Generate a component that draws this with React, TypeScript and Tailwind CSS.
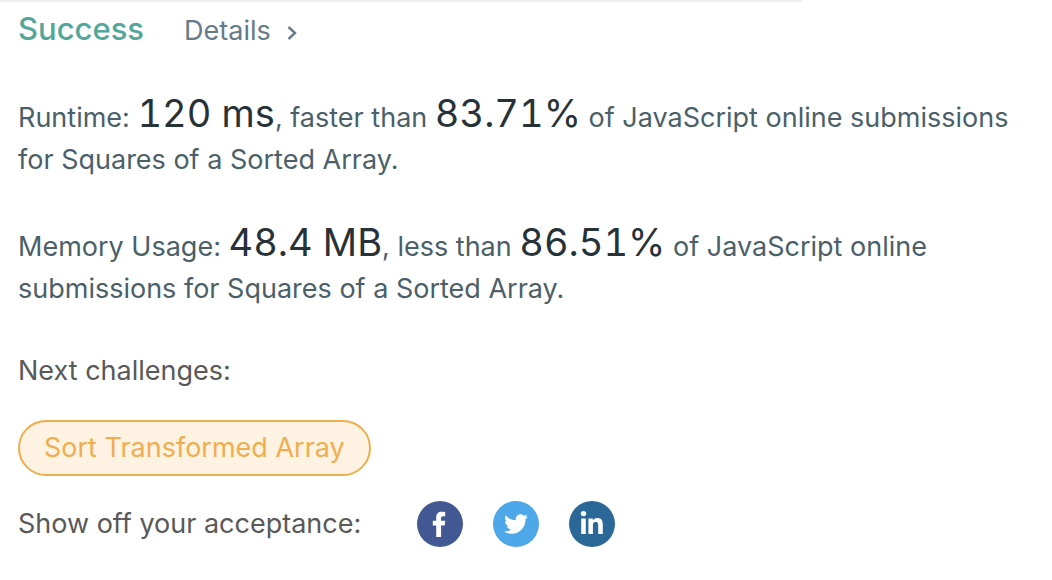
import type { ReactNode } from "react";
import { FaTwitter } from "react-icons/fa";

function Figure({ children }: { children: ReactNode }) {
  return <span className="text-[38px] leading-[42px] tabular-nums text-[#263238]">{children}</span>;
}

function ShareLink({ label, color, children }: { label: string; color: string; children: ReactNode }) {
  return (
    <a href="#" aria-label={label} className={`flex size-[46px] items-center justify-center rounded-full text-white ${color}`}>
      {children}
    </a>
  );
}

function FacebookGlyph() {
  return (
    <svg viewBox="0 0 46 46" className="size-full" fill="currentColor">
      <path d="M19.2 36V24.4h-3.4v-4.6h3.4v-3.2c0-3.8 2.1-5.8 5.7-5.8 1.6 0 2.6.1 3.3.2v4.2h-2.1c-1.6 0-2 .8-2 2v2.6h4.2l-.6 4.6h-3.6V36z" />
    </svg>
  );
}

function LinkedInGlyph() {
  return (
    <svg viewBox="0 0 46 46" className="size-full" fill="currentColor">
      <circle cx="14.5" cy="12.6" r="2.7" />
      <path d="M12.2 17.4h4.6V33h-4.6zM19.4 17.4h4.4v2.1c.7-1.3 2.3-2.5 4.5-2.5 4.6 0 5.5 3 5.5 7v9h-4.6v-8c0-2-.1-4-2.5-4-2.5 0-2.8 1.9-2.8 3.9V33h-4.5z" />
    </svg>
  );
}

export default function App() {
  return (
    <main className="bg-white font-[Inter,sans-serif] text-[27px] leading-[42px] text-[#546e7a]">
      <div className="h-[2px] w-[76.2%] bg-[#eeeeee]" />
      <div className="pl-[18px] pr-8">
        <header className="flex items-baseline gap-10 pt-1.5">
          <h1 className="text-[31px] font-medium text-[#52a69a]">Success</h1>
          <a href="#" className="flex items-center gap-4 text-[#667b8a]">
            Details
            <svg viewBox="0 0 10 16" className="mt-1 h-4 w-[10px]" fill="none" stroke="currentColor" strokeWidth="2.4">
              <path d="M1.5 2 L8 8 L1.5 14" />
            </svg>
          </a>
        </header>

        <p className="mt-10 text-[#4b5f69]">
          Runtime: <Figure>120 ms</Figure>, faster than <Figure>83.71%</Figure> of JavaScript online submissions for Squares of a Sorted Array.
        </p>
        <p className="mt-10 text-[#4b5f69]">
          Memory Usage: <Figure>48.4 MB</Figure>, less than <Figure>86.51%</Figure> of JavaScript online submissions for Squares of a Sorted Array.
        </p>

        <h2 className="mt-10 text-[#595959]">Next challenges:</h2>
        <a href="#" className="mt-7 inline-flex h-14 items-center rounded-full border-2 border-[#f0ad4e] bg-[#fef3e2] px-6 text-[#f0ad4e]">
          Sort Transformed Array
        </a>

        <div className="mt-[25px] flex items-center gap-14 text-[#595959]">
          <span>Show off your acceptance:</span>
          <div className="flex gap-[30px]">
            <ShareLink label="Facebook" color="bg-[#425893]">
              <FacebookGlyph />
            </ShareLink>
            <ShareLink label="Twitter" color="bg-[#4da7e8]">
              <FaTwitter className="size-6" />
            </ShareLink>
            <ShareLink label="LinkedIn" color="bg-[#2c6897]">
              <LinkedInGlyph />
            </ShareLink>
          </div>
        </div>
      </div>
    </main>
  );
}
